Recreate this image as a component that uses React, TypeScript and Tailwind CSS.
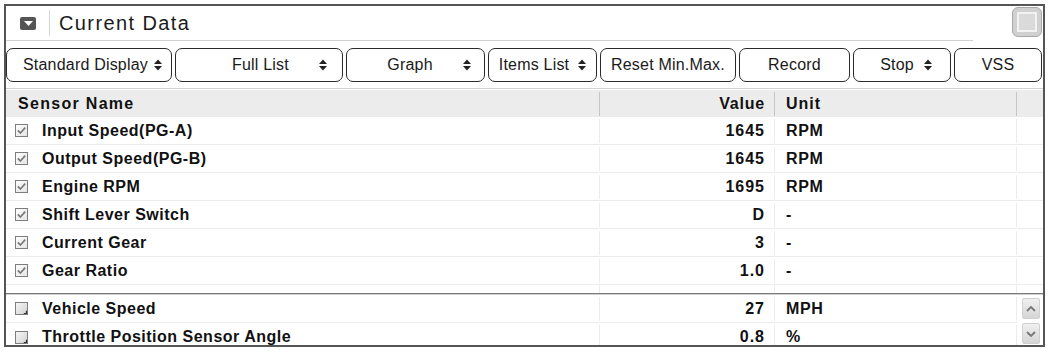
// Panel "Current Data" de um scanner de diagnóstico
type Row = { name: string; value: string; unit: string; checked: boolean }

const topRows: Row[] = [
  { name: "Input Speed(PG-A)", value: "1645", unit: "RPM", checked: true },
  { name: "Output Speed(PG-B)", value: "1645", unit: "RPM", checked: true },
  { name: "Engine RPM", value: "1695", unit: "RPM", checked: true },
  { name: "Shift Lever Switch", value: "D", unit: "-", checked: true },
  { name: "Current Gear", value: "3", unit: "-", checked: true },
  { name: "Gear Ratio", value: "1.0", unit: "-", checked: true },
]

const bottomRows: Row[] = [
  { name: "Vehicle Speed", value: "27", unit: "MPH", checked: false },
  { name: "Throttle Position Sensor Angle", value: "0.8", unit: "%", checked: false },
]

function UpDown() {
  return (
    <svg width="8" height="12" viewBox="0 0 8 12" className="shrink-0">
      <polygon points="0,5 4,0.5 8,5" fill="#222" />
      <polygon points="0,7 4,11.5 8,7" fill="#222" />
    </svg>
  )
}

function Check({ checked }: { checked: boolean }) {
  return (
    <svg width="13" height="13" viewBox="0 0 13 13" className="shrink-0">
      <defs>
        <linearGradient id={checked ? "cbOn" : "cbOff"} x1="0" y1="0" x2="1" y2="1">
          <stop offset="0" stopColor={checked ? "#ffffff" : "#f6f6f6"} />
          <stop offset="1" stopColor={checked ? "#e4e4e4" : "#d2d2d2"} />
        </linearGradient>
      </defs>
      <rect x="0.5" y="0.5" width="12" height="12" fill={`url(#${checked ? "cbOn" : "cbOff"})`} stroke="#7d7d7d" />
      {checked ? (
        <path d="M2.8 6.3 L5.4 9 L10.2 3.6" fill="none" stroke="#7d7d7d" strokeWidth="1.8" />
      ) : (
        <path d="M8.8 11.5 L11.5 11.5 L11.5 8.8" fill="none" stroke="#333" strokeWidth="1.2" />
      )}
    </svg>
  )
}

function DataRow({ row, last }: { row: Row; last?: boolean }) {
  return (
    <div className={`flex h-[28px] shrink-0 items-center ${last ? "" : "border-b border-[#ececec]"}`}>
      <div className="flex w-[594px] items-center border-r border-[#ececec] pl-[9px]">
        <Check checked={row.checked} />
        <span className="ml-[14px] text-[16px] font-bold tracking-[0.5px] text-[#111]">{row.name}</span>
      </div>
      <div className="w-[175px] border-r border-[#ececec] pr-[9px] text-right text-[16px] font-bold tracking-[1px] text-[#111]">
        {row.value}
      </div>
      <div className="w-[242px] border-r border-[#ececec] pl-[11px] text-[16px] font-bold tracking-[0.6px] text-[#111]">
        {row.unit}
      </div>
    </div>
  )
}

type Btn = { label: string; w: string; select?: boolean; pl?: string; pr?: string }

const buttons: Btn[] = [
  { label: "Standard Display", w: "w-[166px]", select: true, pl: "pl-[14px]", pr: "pr-[9px]" },
  { label: "Full List", w: "w-[168px]", select: true, pl: "pl-[30px]", pr: "pr-[15px]" },
  { label: "Graph", w: "w-[139px]", select: true, pl: "pl-[14px]", pr: "pr-[13px]" },
  { label: "Items List", w: "w-[109px]", select: true, pl: "pl-[5px]", pr: "pr-[10px]" },
  { label: "Reset Min.Max.", w: "w-[136px]" },
  { label: "Record", w: "w-[111px]" },
  { label: "Stop", w: "w-[98px]", select: true, pl: "pl-[20px]", pr: "pr-[18px]" },
  { label: "VSS", w: "w-[88px]" },
]

export default function App() {
  return (
    <div className="h-[352px] w-[1050px] bg-white pl-[4px] pt-[4px] font-['Liberation_Sans',Arial,sans-serif] text-[#111]">
      <div className="flex h-[343px] w-[1041px] flex-col border-2 border-[#555]">
        {/* title bar */}
        <div className="flex h-[35px] shrink-0">
          <div className="flex flex-1 items-center border-b border-[#cfcfcf]">
            <div className="ml-[14px] flex h-[13px] w-[16px] items-center justify-center rounded-[2px] bg-[#555]">
              <svg width="9" height="5" viewBox="0 0 9 5">
                <polygon points="0,0 9,0 4.5,5" fill="#fff" />
              </svg>
            </div>
            <div className="ml-[13px] h-[26px] w-px bg-[#d4d4d4]" />
            <span className="ml-[9px] text-[20px] tracking-[1.4px] text-[#1a1a1a]">Current Data</span>
          </div>
          <div className="flex w-[70px] items-start justify-end pr-px pt-px">
            <div className="h-[30px] w-[30px] rounded-[6px] border border-[#a8a8a8] bg-[#d0d0d0] p-[4px]">
              <div className="h-full w-full border-2 border-[#f2f2f2] bg-[#dadada]" />
            </div>
          </div>
        </div>

        {/* button row */}
        <div className="mt-[7px] flex h-[34px] shrink-0 gap-[3px]">
          {buttons.map((b) => (
            <div
              key={b.label}
              className={`flex h-full ${b.w} items-center rounded-[7px] border border-[#2a2a2a] bg-white text-[16px] tracking-[0.2px] text-[#1a1a1a] ${
                b.select ? `${b.pl} ${b.pr}` : "justify-center"
              }`}
            >
              {b.select ? (
                <>
                  <span className="flex-1 whitespace-nowrap text-center">{b.label}</span>
                  <span className="ml-[4px]">
                    <UpDown />
                  </span>
                </>
              ) : (
                <span className="whitespace-nowrap">{b.label}</span>
              )}
            </div>
          ))}
        </div>
        <div className="mt-[6px] h-px shrink-0 bg-[#d2d2d2]" />

        {/* table header */}
        <div className="mt-px flex h-[27px] shrink-0 items-center bg-[#ececec]">
          <div className="w-[594px] border-r border-[#c6c6c6] pl-[12px] text-[16px] font-bold tracking-[1.3px]">
            Sensor Name
          </div>
          <div className="w-[175px] border-r border-[#c6c6c6] pr-[9px] text-right text-[16px] font-bold tracking-[0.8px]">
            Value
          </div>
          <div className="w-[242px] border-r border-[#c6c6c6] pl-[11px] text-[16px] font-bold tracking-[1px]">
            Unit
          </div>
        </div>

        {/* fixed rows */}
        <div className="flex shrink-0 flex-col">
          {topRows.map((r) => (
            <DataRow key={r.name} row={r} />
          ))}
          <div className="flex h-[8px]">
            <div className="w-[594px] border-r border-[#ececec]" />
            <div className="w-[175px] border-r border-[#ececec]" />
            <div className="w-[242px] border-r border-[#ececec]" />
          </div>
        </div>
        <div className="h-px shrink-0 bg-[#7a7a7a]" />
        <div className="h-px shrink-0 bg-[#cfcfcf]" />

        {/* scrolling rows */}
        <div className="flex min-h-0 flex-1 overflow-hidden">
          <div className="flex flex-col">
            {bottomRows.map((r, i) => (
              <DataRow key={r.name} row={r} last={i === bottomRows.length - 1} />
            ))}
          </div>
          <div className="flex flex-1 flex-col items-center gap-[4px] pt-[3px] pl-[2px]">
            <div className="flex h-[21px] w-[18px] items-center justify-center rounded-[2px] border border-[#d0d0d0] bg-gradient-to-b from-[#f0f0f0] to-[#d6d6d6]">
              <svg width="10" height="6" viewBox="0 0 10 6">
                <path d="M1 5 L5 1 L9 5" fill="none" stroke="#777" strokeWidth="1.8" />
              </svg>
            </div>
            <div className="flex h-[21px] w-[18px] items-center justify-center rounded-[2px] border border-[#d0d0d0] bg-gradient-to-b from-[#f0f0f0] to-[#d6d6d6]">
              <svg width="10" height="6" viewBox="0 0 10 6">
                <path d="M1 1 L5 5 L9 1" fill="none" stroke="#777" strokeWidth="1.8" />
              </svg>
            </div>
          </div>
        </div>
      </div>
    </div>
  )
}
